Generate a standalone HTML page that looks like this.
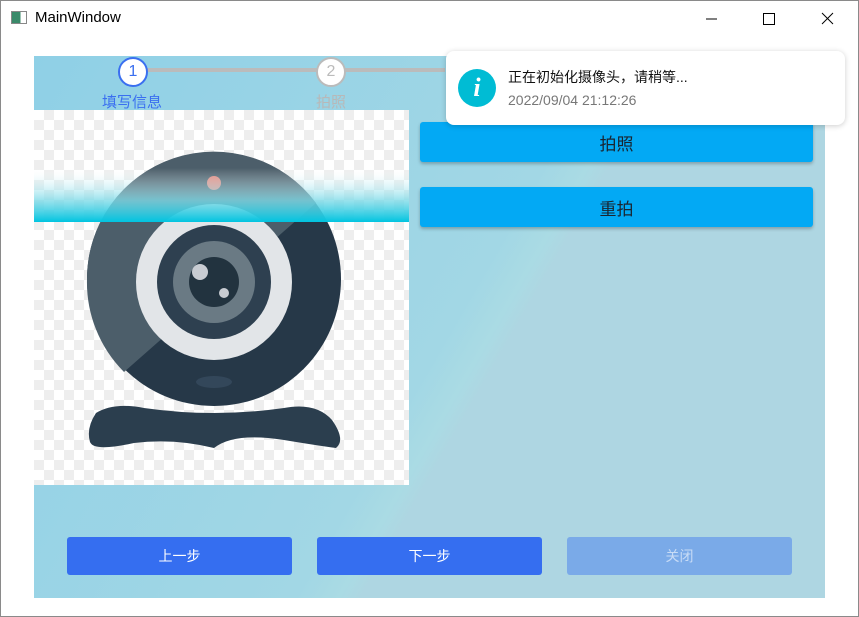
<!DOCTYPE html>
<html><head><meta charset="utf-8"><style>
*{margin:0;padding:0;box-sizing:border-box}
body{width:859px;height:617px;background:#fff;font-family:"Liberation Sans","Noto Sans CJK SC",sans-serif;position:relative;overflow:hidden}
.abs{position:absolute}
.btn{position:absolute;display:flex;align-items:center;justify-content:center;border-radius:3px}
</style></head><body>
<div class="abs" style="left:0;top:0;width:859px;height:617px;border:1px solid #8a8a8a"></div>
<div class="abs" style="left:11px;top:11px;width:16px;height:13px;border:1px solid #888;background:linear-gradient(90deg,#3a8a6a 0 60%,#fff 60%)"></div>
<div class="abs" style="left:35px;top:9px;font-size:15px;color:#000">MainWindow</div>
<svg class="abs" style="left:700px;top:8px" width="150" height="22">
<line x1="6" y1="11" x2="17" y2="11" stroke="#000"/>
<rect x="63.5" y="5.5" width="11" height="11" fill="none" stroke="#000"/>
<line x1="122" y1="5" x2="133" y2="16" stroke="#000"/><line x1="133" y1="5" x2="122" y2="16" stroke="#000"/>
</svg>
<div class="abs" style="left:34px;top:56px;width:791px;height:542px;background:linear-gradient(120deg,#8fd0e6 0%,#a2d7e5 52%,#aadbe4 56%,#aed6e2 58%,#aed6e2 100%)"></div>
<div class="abs" style="left:145px;top:68px;width:300px;height:4px;background:#bbb"></div>
<div class="abs" style="left:118px;top:57px;width:30px;height:30px;border-radius:50%;background:#fff;border:2px solid #3a6ff0;color:#3a6ff0;font-size:16px;text-align:center;line-height:26px">1</div>
<div class="abs" style="left:316px;top:57px;width:30px;height:30px;border-radius:50%;background:#fff;border:2px solid #bbb;color:#bbb;font-size:16px;text-align:center;line-height:26px">2</div>
<div class="abs" style="left:102px;top:91px;font-size:15px;color:#3a6ff0">填写信息</div>
<div class="abs" style="left:316px;top:91px;font-size:15px;color:#b8b8b8">拍照</div>
<div class="abs" style="left:34px;top:110px;width:375px;height:375px;background-color:#fff;background-image:linear-gradient(45deg,#eee 25%,transparent 25%,transparent 75%,#eee 75%),linear-gradient(45deg,#eee 25%,transparent 25%,transparent 75%,#eee 75%);background-size:20px 20px;background-position:0 0,10px 10px"></div>
<svg class="abs" style="left:34px;top:110px" width="375" height="375">
<circle cx="180" cy="169" r="127" fill="#263848"/>
<path d="M53 169 A127 127 0 0 1 282 93 L90 262 A127 127 0 0 1 53 169Z" fill="#4c5e6a"/>
<ellipse cx="180" cy="272" rx="18" ry="6" fill="#33475a"/>
<circle cx="180" cy="172" r="78" fill="#e2e5e8"/>
<circle cx="180" cy="172" r="57" fill="#2e4050"/>
<circle cx="180" cy="172" r="41" fill="#6a7a84"/>
<circle cx="180" cy="172" r="25" fill="#22333f"/>
<circle cx="166" cy="162" r="8" fill="#c8ccd2"/>
<circle cx="190" cy="183" r="5" fill="#c8ccd2"/>
<circle cx="180" cy="73" r="7" fill="#e48a80"/>
<path d="M62 303 Q80 292 110 298 Q180 308 250 298 Q282 292 298 310 Q312 330 302 338 Q280 335 250 330 Q200 322 180 338 Q140 328 100 333 Q60 342 56 332 Q52 318 62 303Z" fill="#2b3e4e"/>
<defs><linearGradient id="g" x1="0" y1="0" x2="0" y2="1"><stop offset="0" stop-color="#ffffff" stop-opacity="0"/><stop offset="0.6" stop-color="#7fdbe8" stop-opacity="0.8"/><stop offset="1" stop-color="#00c4e0"/></linearGradient></defs>
<rect x="0" y="58" width="375" height="54" fill="url(#g)"/>
</svg>
<div class="btn" style="left:420px;top:122px;width:393px;height:40px;background:#03a9f4;font-size:17px;color:#1a2530;box-shadow:0 2px 3px rgba(0,0,0,.25)">拍照</div>
<div class="btn" style="left:420px;top:187px;width:393px;height:40px;background:#03a9f4;font-size:17px;color:#1a2530;box-shadow:0 2px 3px rgba(0,0,0,.25)">重拍</div>
<div class="btn" style="left:67px;top:537px;width:225px;height:38px;background:#356ef0;color:#fff;font-size:14px">上一步</div>
<div class="btn" style="left:317px;top:537px;width:225px;height:38px;background:#356ef0;color:#fff;font-size:14px">下一步</div>
<div class="btn" style="left:567px;top:537px;width:225px;height:38px;background:#7aaae8;color:#c8dcf6;font-size:14px">关闭</div>
<div class="abs" style="left:446px;top:51px;width:399px;height:74px;background:#fff;border-radius:8px;box-shadow:0 1px 6px rgba(0,0,0,.2)"></div>
<div class="abs" style="left:458px;top:69px;width:38px;height:38px;border-radius:50%;background:#00bcd4;color:#fff;font:italic bold 26px 'Liberation Serif',serif;text-align:center;line-height:38px">i</div>
<div class="abs" style="left:508px;top:67px;font-size:14px;color:#111">正在初始化摄像头，请稍等...</div>
<div class="abs" style="left:508px;top:92px;font-size:14px;color:#777">2022/09/04 21:12:26</div>
</body></html>
